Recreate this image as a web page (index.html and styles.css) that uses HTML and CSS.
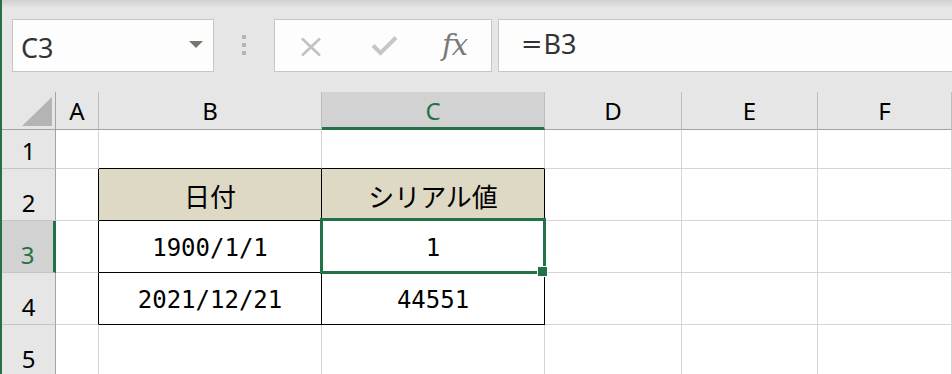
FILE: index.html
```html
<!DOCTYPE html>
<html lang="ja">
<head>
  <meta charset="UTF-8" />
  <title>シリアル値</title>
  <link rel="stylesheet" href="styles.css">
</head>
<body>
  <div class="app">

    <!-- Name box + formula bar -->
    <div class="topbar">
      <div class="namebox">
        <span class="namebox-text">C3</span>
        <span class="dropdown"></span>
      </div>
      <div class="grip">
        <span></span><span></span><span></span>
      </div>
      <div class="fx-buttons">
        <svg class="icon-cancel" width="22" height="20" viewBox="0 0 22 20">
          <path d="M2 1.5 L20 18.5 M20 1.5 L2 18.5" stroke="#c2c2c2" stroke-width="2.6" fill="none" />
        </svg>
        <svg class="icon-enter" width="27" height="21" viewBox="0 0 27 21">
          <path d="M2 10.5 L9.5 18 L25 2.5" stroke="#c6c6c6" stroke-width="4" fill="none" />
        </svg>
        <span class="fx">fx</span>
      </div>
      <div class="formula">
        <span class="eq">=</span>B3
      </div>
    </div>

    <!-- Sheet grid -->
    <div class="sheet">
      <div class="hdr corner"><span class="select-all"></span></div>
      <div class="hdr">A</div>
      <div class="hdr">B</div>
      <div class="hdr hdr-active">C</div>
      <div class="hdr">D</div>
      <div class="hdr">E</div>
      <div class="hdr">F</div>

      <div class="rowhdr">1</div>
      <div class="cell"></div>
      <div class="cell line-b"></div>
      <div class="cell line-b"></div>
      <div class="cell"></div>
      <div class="cell"></div>
      <div class="cell"></div>

      <div class="rowhdr">2</div>
      <div class="cell line-r"></div>
      <div class="cell tbl head">日付</div>
      <div class="cell tbl head">シリアル値</div>
      <div class="cell"></div>
      <div class="cell"></div>
      <div class="cell"></div>

      <div class="rowhdr rowhdr-active">3</div>
      <div class="cell line-r"></div>
      <div class="cell tbl">1900/1/1</div>
      <div class="cell tbl selected">1
        <span class="sel-frame"></span>
        <span class="sel-handle"></span>
      </div>
      <div class="cell"></div>
      <div class="cell"></div>
      <div class="cell"></div>

      <div class="rowhdr">4</div>
      <div class="cell line-r"></div>
      <div class="cell tbl">2021/12/21</div>
      <div class="cell tbl">44551</div>
      <div class="cell"></div>
      <div class="cell"></div>
      <div class="cell"></div>

      <div class="rowhdr">5</div>
      <div class="cell"></div>
      <div class="cell"></div>
      <div class="cell"></div>
      <div class="cell"></div>
      <div class="cell"></div>
      <div class="cell"></div>
    </div>
  </div>
</body>
</html>
```

FILE: styles.css
```css
/* Page */
body {
  margin: 0;
  background: #ffffff;
  overflow: hidden;
}

.app {
  border-left: 2px solid #217346;
  height: 374px;
  overflow: hidden;
  font-family: "Noto Sans", "Open Sans", sans-serif;
  color: #000;
}

/* Top bar: name box and formula bar */
.topbar {
  display: flex;
  height: 92px;
  box-sizing: border-box;
  padding: 19px 0 0 10px;
  background: linear-gradient(#d0d0d0, #e6e6e6 8px, #e6e6e6);
}

.namebox,
.fx-buttons,
.formula {
  height: 53px;
  box-sizing: border-box;
  background: #fdfdfd;
  border: 1px solid #c6c6c6;
  display: flex;
  align-items: center;
}

.namebox {
  width: 202px;
  padding: 3px 10px 0 8px;
  justify-content: space-between;
}

.namebox-text {
  font-size: 27px;
  line-height: 1;
  color: #333;
}

.dropdown {
  width: 0;
  height: 0;
  margin-top: -6px;
  border-left: 7px solid transparent;
  border-right: 7px solid transparent;
  border-top: 7px solid #78746e;
}

.grip {
  width: 60px;
  display: flex;
  flex-direction: column;
  align-items: center;
  gap: 4px;
  padding-top: 16px;
}

.grip span {
  width: 4px;
  height: 4px;
  background: #b4b4b4;
}

.fx-buttons {
  width: 218px;
  padding-left: 25px;
}

.icon-cancel {
  margin-top: 2px;
}

.icon-enter {
  margin-left: 49px;
}

.fx {
  margin-left: 44px;
  margin-top: 0;
  font-family: "DejaVu Serif", "Liberation Serif", serif;
  font-style: italic;
  font-size: 29px;
  line-height: 1;
  letter-spacing: -1px;
  color: #7a7a7a;
}

.formula {
  flex: 1;
  margin-left: 6px;
  margin-right: -4px;
  padding: 0 0 4px 25px;
  font-size: 27px;
  line-height: 1;
  color: #333;
}

.eq {
  margin-right: 4px;
  transform: scaleX(1.3);
}

/* Sheet grid */
.sheet {
  display: grid;
  grid-template-columns: 54px 43px 223px 223px 137px 136px 1fr;
  grid-template-rows: 38px 39px 52px 52px 52px 52px;
}

.sheet > div {
  box-sizing: border-box;
  border-right: 1px solid #d4d4d4;
  border-bottom: 1px solid #d4d4d4;
}

.sheet > .hdr {
  background: #e6e6e6;
  border-right-color: #bdbdbd;
  border-bottom-color: #a3a3a3;
  display: flex;
  align-items: center;
  justify-content: center;
  font-size: 24px;
  line-height: 1;
}

.sheet > .hdr-active {
  background: #d2d2d2;
  color: #217346;
  border-bottom: 3px solid #217346;
  padding-top: 2px;
}

.sheet > .corner {
  border-right-color: #a3a3a3;
  align-items: flex-end;
  justify-content: flex-end;
  padding: 0 3px 3px 0;
}

.select-all {
  width: 30px;
  height: 29px;
  background: #b4b4b4;
  clip-path: polygon(100% 0, 100% 100%, 0 100%);
}

.sheet > .rowhdr {
  background: #e6e6e6;
  border-right-color: #a3a3a3;
  border-bottom-color: #c6c6c6;
  display: flex;
  align-items: flex-end;
  justify-content: center;
  padding-bottom: 5px;
  font-size: 24px;
  line-height: 1;
}

.sheet > .rowhdr-active {
  background: #d2d2d2;
  color: #217346;
  border-right: 3px solid #217346;
}

/* Data table cells */
.cell {
  display: flex;
  align-items: flex-end;
  justify-content: center;
  padding-bottom: 12px;
  font-family: "DejaVu Sans Mono", "Noto Sans CJK JP", monospace;
  font-size: 24px;
  line-height: 1;
}

.head {
  font-family: "Noto Sans CJK JP", sans-serif;
  font-size: 26px;
  padding-bottom: 11px;
}

.sheet > .line-b {
  border-bottom-color: #000;
}

.sheet > .line-r {
  border-right-color: #000;
}

.sheet > .tbl {
  border-right-color: #000;
  border-bottom-color: #000;
}

.sheet > .head {
  background: #ddd9c4;
}

/* Active cell */
.selected {
  position: relative;
}

.sel-frame {
  position: absolute;
  top: -3px;
  left: -2px;
  right: -2px;
  bottom: -2px;
  border: 3px solid #217346;
}

.sel-handle {
  position: absolute;
  right: -3px;
  bottom: -4px;
  width: 9px;
  height: 9px;
  background: #217346;
  box-shadow: 0 0 0 1px #fff;
}
```
